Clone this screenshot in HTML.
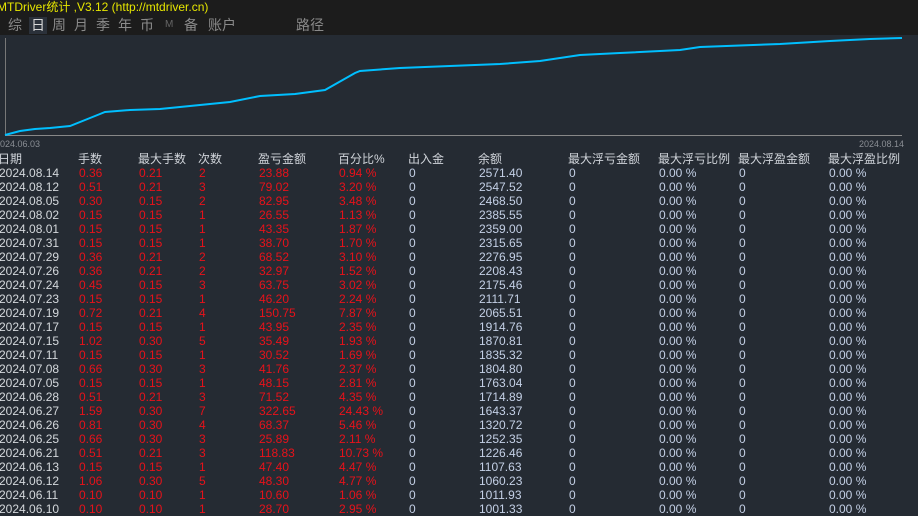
<!DOCTYPE html>
<html><head><meta charset="utf-8"><style>
body{margin:0;width:918px;height:510px;overflow:hidden;background:#252b33;font-family:"Liberation Sans","Noto Sans CJK SC",sans-serif;position:relative}
.top{position:absolute;left:0;top:0;width:918px;height:35px;background:#1c1c1c}
.title{position:absolute;left:-3px;top:-2px;color:#e6e600;font-size:12px;white-space:nowrap}
.tab{position:absolute;top:17px;color:#8a8a8a;font-size:14px;line-height:16px}
.r{position:absolute;left:0;width:918px;height:14px;font-size:12px;line-height:14px;white-space:nowrap}
.r span{position:absolute;top:0}
.d{color:#d4d8dc}.e{color:#e8121a}.b{color:#c4d0e6}.h{color:#d0d4da;font-size:12px}
</style></head><body>
<div class="top"></div>
<div class="title">MTDriver统计 ,V3.12 (http://mtdriver.cn)</div>
<div style="position:absolute;left:29px;top:17px;width:18px;height:17px;background:#2b313a"></div>
<div class="tab" style="left:8px">综</div>
<div class="tab" style="left:31px;color:#d8d8d8">日</div>
<div class="tab" style="left:52px">周</div>
<div class="tab" style="left:74px">月</div>
<div class="tab" style="left:96px">季</div>
<div class="tab" style="left:118px">年</div>
<div class="tab" style="left:140px">币</div>
<div class="tab" style="left:165px;font-size:10px;color:#666">M</div>
<div class="tab" style="left:184px">备</div>
<div class="tab" style="left:208px">账户</div>
<div class="tab" style="left:296px">路径</div>
<svg style="position:absolute;left:0;top:0" width="918" height="150">
<line x1="5.5" y1="38" x2="5.5" y2="135" stroke="#777" stroke-width="1"/>
<line x1="5" y1="135.5" x2="902" y2="135.5" stroke="#888" stroke-width="1"/>
<polyline fill="none" stroke="#00bfff" stroke-width="2" points="5,135 20,131 35,129 50,128 70,126 100,114 105,112 130,110 160,109 200,105 230,102 260,96 295,94 325,90 355,73 360,71 400,68 450,66 500,64 540,61 580,55 620,53 680,50 700,47 780,44 830,41 870,39 902,38"/>
<text x="0" y="147" fill="#8a8e94" font-size="9" font-family="Liberation Sans">024.06.03</text>
<text x="859" y="147" fill="#8a8e94" font-size="9" font-family="Liberation Sans">2024.08.14</text>
</svg>
<div class="r h" style="top:151px;height:16px;line-height:16px">
<span style="left:-2px">日期</span><span style="left:78px">手数</span><span style="left:138px">最大手数</span><span style="left:198px">次数</span><span style="left:258px">盈亏金额</span><span style="left:338px">百分比%</span><span style="left:408px">出入金</span><span style="left:478px">余额</span><span style="left:568px">最大浮亏金额</span><span style="left:658px">最大浮亏比例</span><span style="left:738px">最大浮盈金额</span><span style="left:828px">最大浮盈比例</span></div>
<div id="rows"></div>
<script>
var d=[["2024.08.14","0.36","0.21","2","23.88","0.94 %","2571.40"],["2024.08.12","0.51","0.21","3","79.02","3.20 %","2547.52"],["2024.08.05","0.30","0.15","2","82.95","3.48 %","2468.50"],["2024.08.02","0.15","0.15","1","26.55","1.13 %","2385.55"],["2024.08.01","0.15","0.15","1","43.35","1.87 %","2359.00"],["2024.07.31","0.15","0.15","1","38.70","1.70 %","2315.65"],["2024.07.29","0.36","0.21","2","68.52","3.10 %","2276.95"],["2024.07.26","0.36","0.21","2","32.97","1.52 %","2208.43"],["2024.07.24","0.45","0.15","3","63.75","3.02 %","2175.46"],["2024.07.23","0.15","0.15","1","46.20","2.24 %","2111.71"],["2024.07.19","0.72","0.21","4","150.75","7.87 %","2065.51"],["2024.07.17","0.15","0.15","1","43.95","2.35 %","1914.76"],["2024.07.15","1.02","0.30","5","35.49","1.93 %","1870.81"],["2024.07.11","0.15","0.15","1","30.52","1.69 %","1835.32"],["2024.07.08","0.66","0.30","3","41.76","2.37 %","1804.80"],["2024.07.05","0.15","0.15","1","48.15","2.81 %","1763.04"],["2024.06.28","0.51","0.21","3","71.52","4.35 %","1714.89"],["2024.06.27","1.59","0.30","7","322.65","24.43 %","1643.37"],["2024.06.26","0.81","0.30","4","68.37","5.46 %","1320.72"],["2024.06.25","0.66","0.30","3","25.89","2.11 %","1252.35"],["2024.06.21","0.51","0.21","3","118.83","10.73 %","1226.46"],["2024.06.13","0.15","0.15","1","47.40","4.47 %","1107.63"],["2024.06.12","1.06","0.30","5","48.30","4.77 %","1060.23"],["2024.06.11","0.10","0.10","1","10.60","1.06 %","1011.93"],["2024.06.10","0.10","0.10","1","28.70","2.95 %","1001.33"]];
var h="";d.forEach(function(r,i){h+='<div class="r" style="top:'+(166+i*14)+'px"><span class="d" style="left:-1px">'+r[0]+'</span><span class="e" style="left:79px">'+r[1]+'</span><span class="e" style="left:139px">'+r[2]+'</span><span class="e" style="left:199px">'+r[3]+'</span><span class="e" style="left:259px">'+r[4]+'</span><span class="e" style="left:339px">'+r[5]+'</span><span class="b" style="left:409px">0</span><span class="b" style="left:479px">'+r[6]+'</span><span class="b" style="left:569px">0</span><span class="b" style="left:659px">0.00 %</span><span class="b" style="left:739px">0</span><span class="b" style="left:829px">0.00 %</span></div>';});
document.getElementById("rows").innerHTML=h;
</script>
</body></html>
